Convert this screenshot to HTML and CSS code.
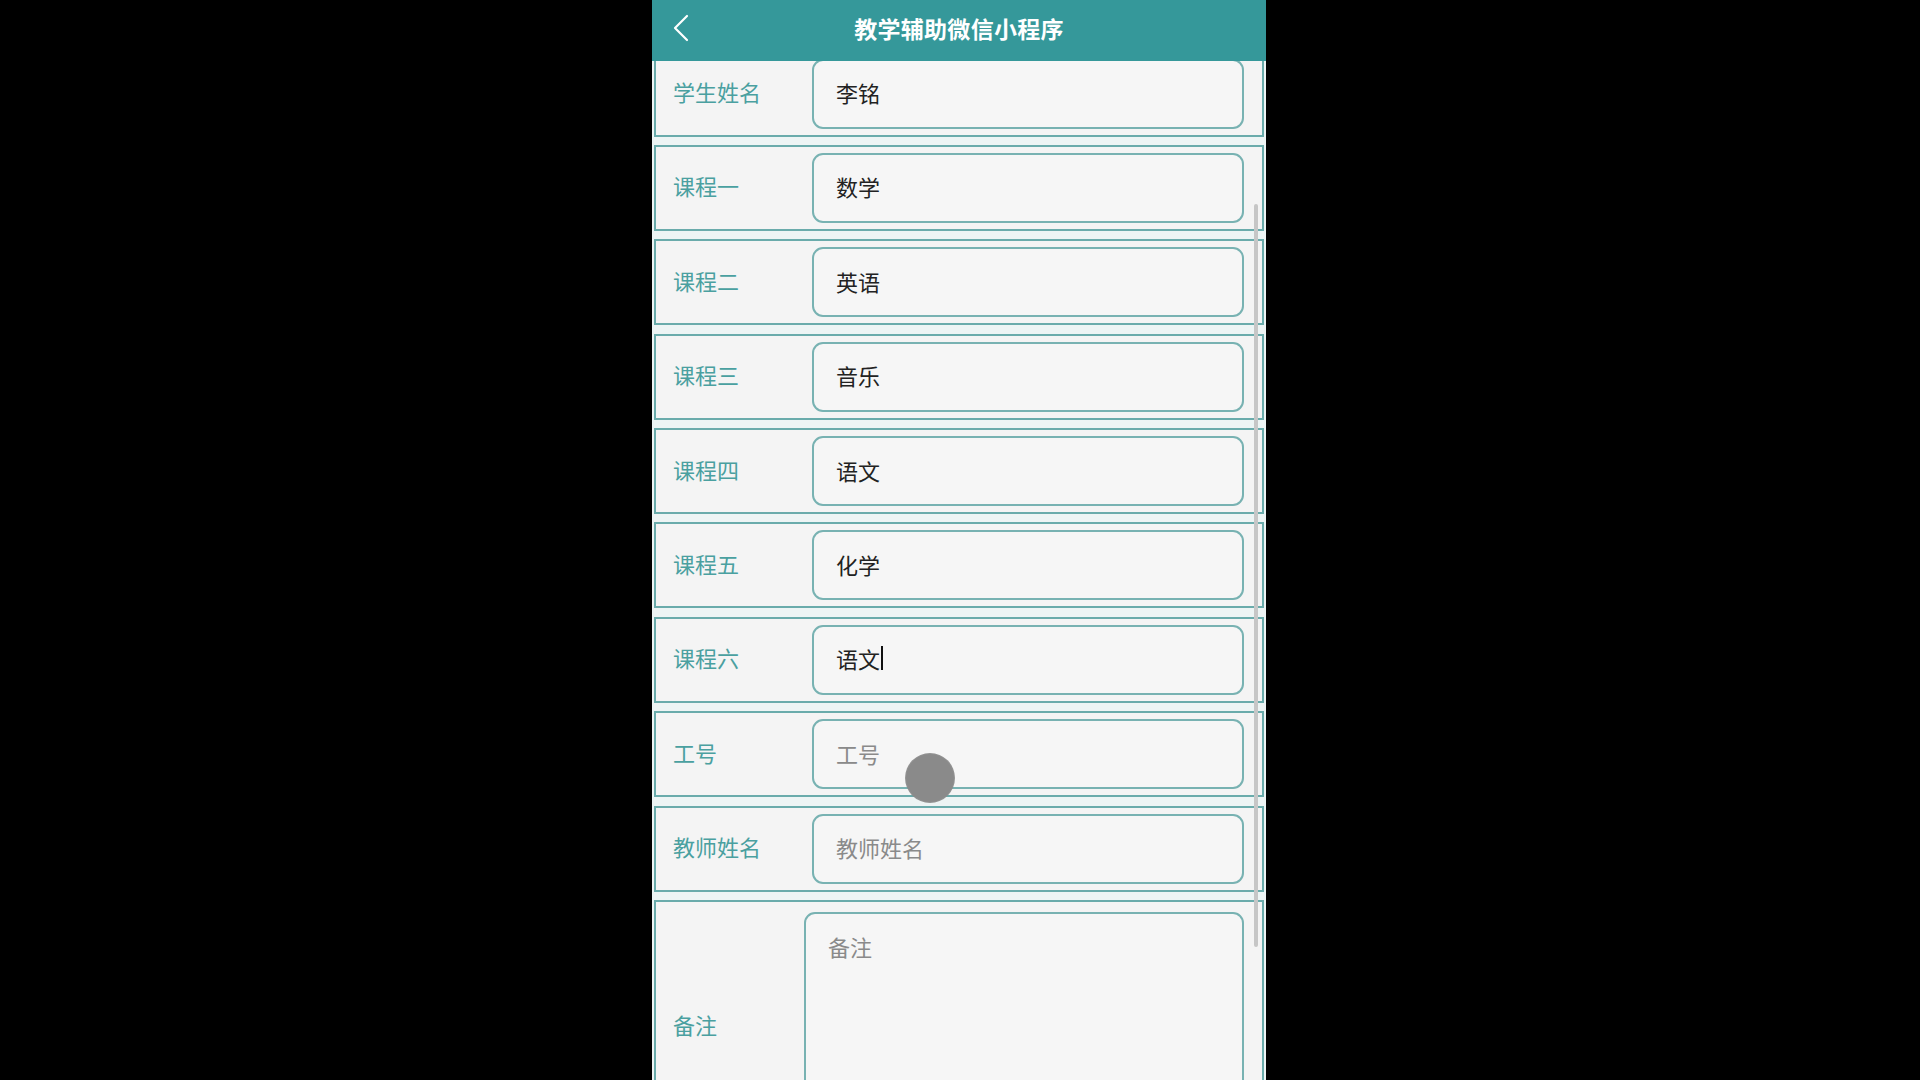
FILE: index.html
```html
<!DOCTYPE html>
<html lang="zh-CN">
<head>
<meta charset="utf-8">
<title>教学辅助微信小程序</title>
<link rel="stylesheet" href="styles.css">
</head>
<body>
<div class="phone">
  <header class="topbar">
    <div class="back">
      <svg width="18" height="28" viewBox="0 0 18 28"><path d="M15 2 L3 14 L15 26" fill="none" stroke="#ffffff" stroke-width="2.2" stroke-linecap="round" stroke-linejoin="round"/></svg>
    </div>
    <div class="title">教学辅助微信小程序</div>
    <div></div>
  </header>
  <main class="scroll">
    <div class="form">
      <div class="row"><div class="label">学生姓名</div><div class="field">李铭</div></div>
      <div class="row"><div class="label">课程一</div><div class="field">数学</div></div>
      <div class="row"><div class="label">课程二</div><div class="field">英语</div></div>
      <div class="row"><div class="label">课程三</div><div class="field">音乐</div></div>
      <div class="row"><div class="label">课程四</div><div class="field">语文</div></div>
      <div class="row"><div class="label">课程五</div><div class="field">化学</div></div>
      <div class="row"><div class="label">课程六</div><div class="field">语文<span class="caret"></span></div></div>
      <div class="row"><div class="label">工号</div><div class="field placeholder">工号</div></div>
      <div class="row"><div class="label">教师姓名</div><div class="field placeholder">教师姓名</div></div>
      <div class="row row-tall"><div class="label label-tall">备注</div><div class="field area placeholder">备注</div></div>
    </div>
    <div class="scrollbar"></div>
    <div class="touch"></div>
  </main>
</div>
</body>
</html>
```
FILE: styles.css
```css
html, body {
  margin: 0;
  padding: 0;
  background: #000000;
  height: 1080px;
  overflow: hidden;
}
body {
  font-family: "Noto Sans CJK SC", "Noto Sans", sans-serif;
}
.phone {
  width: 614px;
  height: 1080px;
  margin-left: 652px;
  background: #edf4f4;
  display: flex;
  flex-direction: column;
  position: relative;
  overflow: hidden;
}
.topbar {
  height: 61px;
  flex: none;
  background: #35989a;
  display: grid;
  grid-template-columns: 1fr auto 1fr;
  align-items: center;
  position: relative;
  z-index: 2;
}
.back {
  padding-left: 20px;
  padding-bottom: 6px;
  display: flex;
  align-items: center;
}
.title {
  color: #ffffff;
  font-weight: bold;
  font-size: 23px;
  padding-bottom: 6px;
  letter-spacing: 0.3px;
}
.scroll {
  flex: 1;
  position: relative;
  overflow: hidden;
}
.form {
  margin-top: -10.4px;
  display: flex;
  flex-direction: column;
  gap: 8.375px;
}
.row {
  height: 86px;
  box-sizing: border-box;
  margin: 0 2px;
  border: 2px solid #6aabab;
  background: #f4f4f4;
  display: flex;
  align-items: center;
  padding: 6px 18px 6px 17px;
}
.row-tall {
  height: 254px;
  padding-top: 10px;
  padding-bottom: 10px;
}
.label {
  width: 139px;
  flex: none;
  color: #4aa0a0;
  font-size: 22px;
  line-height: 1;
  padding-bottom: 5px;
}
.label-tall {
  width: 131px;
}
.field {
  flex: 1;
  height: 70px;
  box-sizing: border-box;
  border: 2px solid #78b2b2;
  border-radius: 11px;
  background: #f6f6f6;
  padding-left: 22px;
  padding-bottom: 3px;
  display: flex;
  align-items: center;
  font-size: 22px;
  color: #222222;
}
.placeholder {
  color: #8a8a8a;
}
.area {
  align-self: flex-start;
  height: 232px;
  align-items: flex-start;
  padding-top: 19px;
  line-height: 1.2;
}
.caret {
  display: inline-block;
  width: 1.5px;
  height: 24px;
  background: #111111;
  margin-left: 1px;
}
.scrollbar {
  position: absolute;
  left: 602px;
  top: 143px;
  width: 4px;
  height: 743px;
  border-radius: 2px;
  background: #c6c6c6;
}
.touch {
  position: absolute;
  left: 253px;
  top: 692px;
  width: 50px;
  height: 50px;
  border-radius: 50%;
  background: radial-gradient(circle, #8a8a8a 0%, #8a8a8a 66%, rgba(138,138,138,0.55) 84%, rgba(138,138,138,0) 100%);
}
```
